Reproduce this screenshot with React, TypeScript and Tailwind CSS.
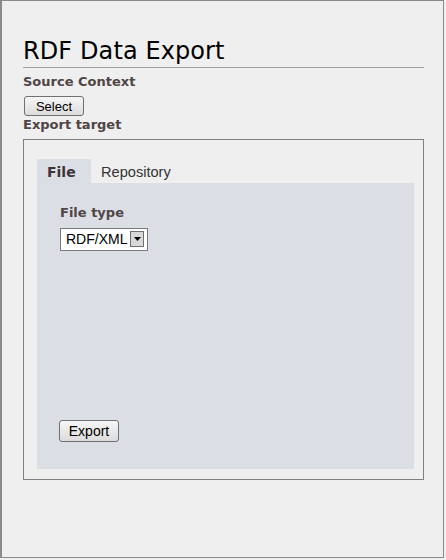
import React from 'react'

const label = "font-['DejaVu_Sans',Verdana,sans-serif] font-bold text-[13px] text-[#4f4545] leading-4"

function Button({ children, className = '' }: { children: React.ReactNode; className?: string }) {
  return (
    <button
      className={`h-5 border border-[#707070] rounded-[3px] bg-gradient-to-b from-[#f6f6f6] to-[#dcdcdc] font-['Liberation_Sans',Arial,sans-serif] text-[13px] leading-none text-black ${className}`}
    >
      {children}
    </button>
  )
}

export default function App() {
  return (
    <div className="w-[446px] h-[560px] bg-[#f0f0f0] p-0">
      <div className="w-[444px] h-[558px] border border-l-2 border-[#8a8a8a] bg-[#efefef] pl-[21px] pr-[19px] pt-[35px]">
        {/* Title */}
        <h1 className="font-['DejaVu_Sans',Tahoma,sans-serif] text-[24px] leading-[30px] text-black tracking-[0.1px]">
          RDF Data Export
        </h1>
        <div className="h-px bg-[#a0a0a0] mt-[1px]" />

        <div className={`${label} mt-[6px]`}>Source Context</div>
        <Button className="w-[60px] mt-[6px] ml-px">Select</Button>
        <div className={label}>Export target</div>

        {/* Export target box */}
        <div className="mt-[6px] h-[341px] border border-[#808080] pl-[13px] pr-[9px] pt-[19px]">
          <div className="flex items-end">
            <div className="w-[54px] h-6 bg-[#dcdee6] pl-[10px] pt-[3px] font-['DejaVu_Sans',Verdana,sans-serif] font-bold text-[14px] text-[#3d3535]">
              File
            </div>
            <div className="h-6 pl-[10px] pt-[3px] font-['Liberation_Sans',Arial,sans-serif] text-[14.6px] text-[#333]">
              Repository
            </div>
          </div>
          <div className="h-[286px] bg-[#dcdee6] pl-[22px] pt-[22px] flex flex-col">
            <div className={`${label} ml-px`}>File type</div>
            <div className="mt-[7px] ml-px w-[88px] h-[23px] bg-white border border-[#7a7a7a] flex items-center justify-between pl-[5px] pr-[3px]">
              <span className="font-['Liberation_Sans',Arial,sans-serif] text-[14px] text-black">RDF/XML</span>
              <span className="w-[14px] h-[16px] border border-[#707070] bg-[#d8d8d8] flex items-center justify-center">
                <svg width="7" height="4" viewBox="0 0 7 4">
                  <path d="M0 0 H7 L3.5 4 Z" fill="#000" />
                </svg>
              </span>
            </div>
            <div className="flex-1" />
            <Button className="w-[60px] h-[22px] mb-[27px] text-[14px]">Export</Button>
          </div>
        </div>
      </div>
    </div>
  )
}
